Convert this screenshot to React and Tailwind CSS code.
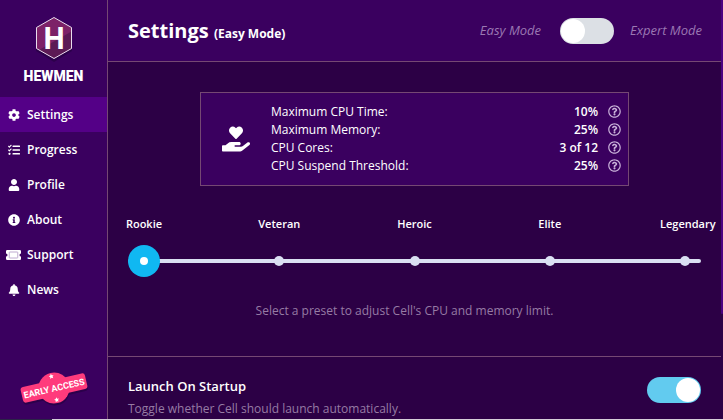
import { useState } from "react";
import {
  FaBell,
  FaCog,
  FaHandHoldingHeart,
  FaInfoCircle,
  FaRegQuestionCircle,
  FaTasks,
  FaUser,
} from "react-icons/fa";

function Ticket({ className }) {
  return (
    <svg viewBox="0 0 30 20" fill="currentColor" className={className} aria-hidden="true">
      <path d="M2.500 0h25A2.500 2.500 0 0 1 30 2.500V7a3 3 0 0 0 0 6v4.500a2.500 2.500 0 0 1-2.500 2.500h-25A2.500 2.500 0 0 1 0 17.500V13a3 3 0 0 0 0-6V2.500A2.500 2.500 0 0 1 2.500 0z" />
      <rect x="6.500" y="4" width="17" height="12" rx="1" fill="none" stroke="#a98fc0" strokeWidth="1.500" />
    </svg>
  );
}

const NAV = [
  { label: "Settings", Icon: FaCog, active: true },
  { label: "Progress", Icon: FaTasks },
  { label: "Profile", Icon: FaUser },
  { label: "About", Icon: FaInfoCircle },
  { label: "Support", Icon: Ticket, wide: true },
  { label: "News", Icon: FaBell },
];

const LIMITS = [
  ["Maximum CPU Time:", "10%"],
  ["Maximum Memory:", "25%"],
  ["CPU Cores:", "3 of 12"],
  ["CPU Suspend Threshold:", "25%"],
];

const PRESETS = ["Rookie", "Veteran", "Heroic", "Elite", "Legendary"];

function Logo() {
  return (
    <div className="flex flex-col items-center pt-3">
      <svg width="48" height="52" viewBox="0 0 48 52" role="img" aria-label="Hewmen logo">
        <path d="M24 8 42 18v21L24 50 6 39V18z" fill="#1d0038" opacity="0.5" />
        <path d="M24 5.500 41.500 15.500v21L24 46.500 6.500 36.500v-21z" fill="#7d2268" />
        <path d="M41.500 19.500v17L24 46.500 9 37.900z" fill="#5c1a55" />
        <path
          d="M24 5.500 41.500 15.500v21L24 46.500 6.500 36.500v-21z"
          fill="none"
          stroke="#e9dcee"
          strokeWidth="1"
        />
        <text
          x="24"
          y="37"
          textAnchor="middle"
          fill="#ffffff"
          className="font-['Noto_Sans_CJK_JP',sans-serif] text-[30px] font-bold"
        >
          H
        </text>
      </svg>
      <span className="mt-1 font-['Roboto',sans-serif] text-sm leading-4 font-black">HEWMEN</span>
    </div>
  );
}

function EarlyAccess() {
  return (
    <svg width="76" height="40" viewBox="0 0 76 40" role="img" aria-label="Early access" className="mx-auto">
      <g transform="rotate(-13 38 20)">
        <g fill="#1d0038" opacity="0.5">
          <circle cx="38" cy="22" r="15.500" />
          <rect x="5" y="14" width="66" height="16" rx="3" />
        </g>
        <g fill="#ff3b7c">
          <circle cx="38" cy="20" r="15.500" />
          <rect x="5" y="12" width="66" height="16" rx="3" />
        </g>
        <g fill="#ffffff">
          <path d="m38 5.500.8 1.600 1.700.3-1.300 1.200.3 1.700-1.500-.8-1.500.8.3-1.700-1.300-1.200 1.700-.3z" />
          <path d="m38 29.500.8 1.600 1.700.3-1.300 1.200.3 1.700-1.500-.8-1.500.8.3-1.700-1.300-1.200 1.700-.3z" />
        </g>
        <text
          x="38"
          y="23.500"
          textAnchor="middle"
          fill="#ffffff"
          className="font-['Roboto',sans-serif] text-[9px] font-bold"
        >
          EARLY ACCESS
        </text>
      </g>
    </svg>
  );
}

function Toggle({ id, defaultChecked = false, label }) {
  return (
    <input
      id={id}
      type="checkbox"
      role="switch"
      aria-label={label}
      defaultChecked={defaultChecked}
      className="flex h-[26px] w-[54px] shrink-0 cursor-pointer appearance-none items-center rounded-full bg-[#dce0e5] px-px before:size-6 before:rounded-full before:bg-white before:content-[''] checked:justify-end checked:bg-[#62cbef]"
    />
  );
}

function PresetSlider() {
  const [level, setLevel] = useState(0);
  return (
    <div className="px-5">
      <div className="-mx-[9px] flex justify-between text-[11px] leading-4 font-semibold">
        {PRESETS.map((name) => (
          <span key={name} className="flex w-[50px] shrink-0 justify-center">
            <span className={name === "Legendary" ? "w-full" : ""}>{name}</span>
          </span>
        ))}
      </div>
      <div className="relative mt-[13px] h-8">
        <input
          type="range"
          aria-label="Preset"
          min="0"
          max="4"
          value={level}
          onChange={(e) => setLevel(Number(e.target.value))}
          className="block h-8 w-full cursor-pointer appearance-none bg-transparent [&::-webkit-slider-runnable-track]:h-1 [&::-webkit-slider-runnable-track]:rounded-full [&::-webkit-slider-runnable-track]:bg-[#dadff2] [&::-webkit-slider-thumb]:-mt-3.5 [&::-webkit-slider-thumb]:size-8 [&::-webkit-slider-thumb]:appearance-none [&::-webkit-slider-thumb]:rounded-full [&::-webkit-slider-thumb]:bg-[#10b8f2]"
        />
        <div className="pointer-events-none absolute inset-0 flex items-center justify-between px-[11px]">
          {PRESETS.map((name, i) => (
            <span key={name} className="flex size-2.5 items-center justify-center">
              <span
                className={
                  i === level ? "size-2 rounded-full bg-white" : "size-2.5 rounded-full bg-[#dadff2]"
                }
              />
            </span>
          ))}
        </div>
      </div>
    </div>
  );
}

export default function App() {
  return (
    <div className="flex h-screen flex-col overflow-hidden bg-[#2c0045] font-['Open_Sans',sans-serif] text-xs text-white">
      <div className="flex min-h-0 flex-1">
        <aside className="flex w-[108px] shrink-0 flex-col border-r border-[#754873] bg-[#3a005f]">
          <Logo />
          <nav className="mt-[13px] flex flex-col">
            {NAV.map(({ label, Icon, active, wide }) => (
              <a
                key={label}
                href={`#${label.toLowerCase()}`}
                className={`flex h-[35px] items-center gap-1.5 pl-1.5 font-semibold ${active ? "bg-[#540087]" : ""}`}
              >
                <span className="flex w-[15px] justify-center">
                  <Icon className={wide ? "h-2.5 w-[15px]" : "size-3"} />
                </span>
                {label}
              </a>
            ))}
          </nav>
          <div className="mt-auto pb-[11px]">
            <EarlyAccess />
          </div>
        </aside>

        <main className="min-w-0 flex-1 overflow-hidden">
          <header className="flex h-[62px] items-center justify-between border-b border-[#754873] bg-[#3a005f] pr-[19px] pl-5">
            <h1 className="text-xl font-bold">
              Settings <small className="text-xs">(Easy Mode)</small>
            </h1>
            <div className="flex items-center text-[13px] text-[#9b78b3] italic">
              <label htmlFor="mode" className="mr-[19px]">
                Easy Mode
              </label>
              <Toggle id="mode" label="Expert mode" />
              <label htmlFor="mode" className="ml-4">
                Expert Mode
              </label>
            </div>
          </header>

          <section className="border-b border-[#754873] pt-[30px] pb-[35px]">
            <div className="mx-auto flex w-[70%] items-center border border-[#754873] bg-[#3a005f] py-2.5 pr-[7px] pl-[21px]">
              <FaHandHoldingHeart className="size-7 shrink-0" />
              <table className="ml-[21px] flex-1">
                <tbody>
                  {LIMITS.map(([name, value]) => (
                    <tr key={name} className="h-[18px] leading-[18px]">
                      <th scope="row" className="p-0 text-left font-normal">
                        {name}
                      </th>
                      <td className="p-0 text-right font-semibold">{value}</td>
                      <td className="w-[23px] p-0">
                        <button type="button" aria-label={`About ${name}`} className="mb-0.5 ml-auto block text-[#c8b0d8]">
                          <FaRegQuestionCircle className="size-[13px]" />
                        </button>
                      </td>
                    </tr>
                  ))}
                </tbody>
              </table>
            </div>
            <div className="mt-[30px]">
              <PresetSlider />
            </div>
            <p className="mt-6 pr-5 text-center leading-5 text-[#967ba4]">
              Select a preset to adjust Cell's CPU and memory limit.
            </p>
          </section>

          <section className="flex justify-between px-5 pt-5">
            <div>
              <label htmlFor="startup" className="block text-[13px] leading-[18px] font-semibold">
                Launch On Startup
              </label>
              <p className="mt-1 leading-5 text-[#967ba4]">
                Toggle whether Cell should launch automatically.
              </p>
            </div>
            <Toggle id="startup" defaultChecked />
          </section>
        </main>
        <div className="w-0.5 shrink-0">
          <div className="h-3/4 rounded-b-full bg-[#4c0080]" />
        </div>
      </div>
      <div className="flex h-px shrink-0 bg-[#d6cfda]">
        <div className="w-[52px] bg-[#2b2547]" />
      </div>
    </div>
  );
}
